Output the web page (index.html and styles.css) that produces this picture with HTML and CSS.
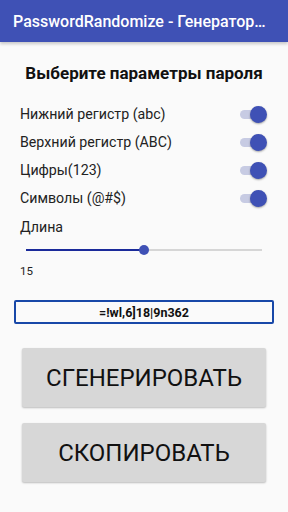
FILE: index.html
```html
<!DOCTYPE html>
<html>
<head>
<meta charset="utf-8">
<link rel="stylesheet" href="styles.css">
</head>
<body>
<div class="appbar"><span class="title">PasswordRandomize - Генератор…</span></div>
<main class="content">
  <h1 class="heading">Выберите параметры пароля</h1>
  <div class="options">
    <div class="row"><span>Нижний регистр (abc)</span><span class="switch"><span class="track"></span><span class="thumb"></span></span></div>
    <div class="row"><span>Верхний регистр (ABC)</span><span class="switch"><span class="track"></span><span class="thumb"></span></span></div>
    <div class="row"><span>Цифры(123)</span><span class="switch"><span class="track"></span><span class="thumb"></span></span></div>
    <div class="row"><span>Символы (@#$)</span><span class="switch"><span class="track"></span><span class="thumb"></span></span></div>
  </div>
  <div class="label">Длина</div>
  <div class="slider"><span class="active" style="width:50%"></span><span class="knob"></span><span class="rest"></span></div>
  <div class="value">15</div>
  <div class="field">=!wl,6]18|9n362</div>
  <button class="btn">СГЕНЕРИРОВАТЬ</button>
  <button class="btn">СКОПИРОВАТЬ</button>
</main>
</body>
</html>
```
FILE: styles.css
```css
* { box-sizing: border-box; }
html, body { margin: 0; padding: 0; }
body {
  width: 288px; height: 512px; overflow: hidden;
  background: #fafafa;
  font-family: Roboto, "Noto Sans", sans-serif;
  color: #222;
}
.appbar {
  height: 42px;
  background: #3f51b5;
  display: flex; align-items: center;
  padding-left: 13px;
  box-shadow: 0 2px 3px rgba(0,0,0,0.2);
}
.title { color: #fff; font-size: 16px; font-weight: 500; white-space: nowrap; }
.content { display: flex; flex-direction: column; padding: 0 20px; }
.heading {
  margin: 21px 0 0; text-align: center;
  font-size: 17px; font-weight: 700; color: #111;
  line-height: 20px; white-space: nowrap;
}
.options { margin-top: 17px; display: flex; flex-direction: column; }
.row {
  height: 28px; display: flex; align-items: center; justify-content: space-between;
  font-size: 14.2px; color: #222;
}
.switch { position: relative; width: 27px; height: 18px; margin-right: 1px; }
.track {
  position: absolute; left: 0; top: 4.5px; width: 22px; height: 9px;
  border-radius: 5px; background: #c7cbe3;
}
.thumb {
  position: absolute; right: 0; top: 0.5px; width: 17px; height: 17px;
  border-radius: 50%; background: #3f51b5;
  box-shadow: 0 1px 2px rgba(0,0,0,0.35);
}
.label { margin-top: 1px; font-size: 14.2px; line-height: 28px; }
.slider {
  position: relative; height: 12px; margin: 3px 6px 0 6px;
  display: flex; align-items: center;
}
.slider .active { height: 2px; background: #1a2a9a; }
.slider .rest { flex: 1; height: 2px; background: #d6d6d6; }
.slider .knob {
  width: 10px; height: 10px; border-radius: 50%; background: #3f51b5;
  margin: 0 -5px; position: relative; z-index: 1;
}
.value { margin-top: 9px; font-size: 11.5px; line-height: 13px; }
.field {
  margin: 22px -6px 0; height: 24px;
  border: 2px solid #1848a8; border-radius: 2px;
  display: flex; align-items: center; justify-content: center;
  font-size: 12.5px; font-weight: 700; color: #111; background: #fafafa;
}
.btn {
  margin: 24px 2px 0; height: 59px;
  background: #d7d7d7; border: none; border-radius: 2px;
  box-shadow: 0 1px 2px rgba(0,0,0,0.25);
  font-family: Roboto, sans-serif; font-size: 24px; color: #111;
  font-weight: 400;
}
.btn + .btn { margin-top: 16px; }
```
